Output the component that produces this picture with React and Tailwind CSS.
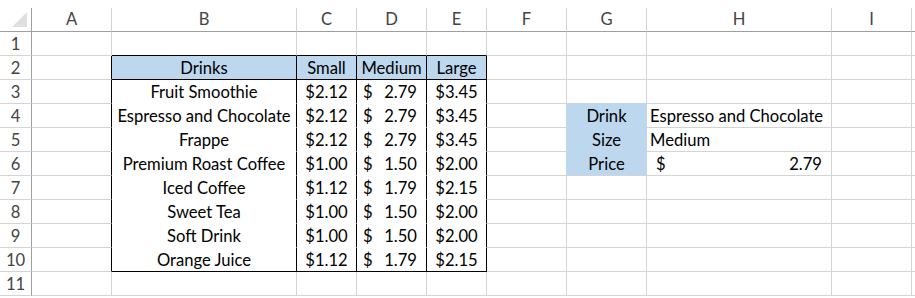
import React from 'react';

const COLS = ['A', 'B', 'C', 'D', 'E', 'F', 'G', 'H', 'I'];
const ROWS = [1, 2, 3, 4, 5, 6, 7, 8, 9, 10, 11];

const drinks = [
  ['Fruit Smoothie', '$2.12', '2.79', '$3.45'],
  ['Espresso and Chocolate', '$2.12', '2.79', '$3.45'],
  ['Frappe', '$2.12', '2.79', '$3.45'],
  ['Premium Roast Coffee', '$1.00', '1.50', '$2.00'],
  ['Iced Coffee', '$1.12', '1.79', '$2.15'],
  ['Sweet Tea', '$1.00', '1.50', '$2.00'],
  ['Soft Drink', '$1.00', '1.50', '$2.00'],
  ['Orange Juice', '$1.12', '1.79', '$2.15'],
];

// cell content keyed by address
const cells = {
  B2: { text: 'Drinks', align: 'center' },
  C2: { text: 'Small', align: 'center' },
  D2: { text: 'Medium', align: 'center' },
  E2: { text: 'Large', align: 'center' },
  G4: { text: 'Drink', align: 'center' },
  H4: { text: 'Espresso and Chocolate', align: 'left' },
  G5: { text: 'Size', align: 'center' },
  H5: { text: 'Medium', align: 'left' },
  G6: { text: 'Price', align: 'center' },
  H6: { text: '2.79', align: 'acct', pad: 'wide' },
};
drinks.forEach(([name, s, m, l], i) => {
  const r = i + 3;
  cells['B' + r] = { text: name, align: 'center' };
  cells['C' + r] = { text: s, align: 'center' };
  cells['D' + r] = { text: m, align: 'acct' };
  cells['E' + r] = { text: l, align: 'center' };
});

const inTable = (c) => c >= 1 && c <= 4;

const Cell = ({ r, c }) => {
  const data = cells[COLS[c] + r];

  let right = 'border-r-[#d4d4d4]';
  if (r >= 2 && r <= 10 && c <= 4) right = 'border-r-black';
  else if (r >= 4 && r <= 6 && (c === 5 || c === 6)) right = 'border-r-[#bdd7ee]';

  let bottom = 'border-b-[#d4d4d4]';
  if (inTable(c) && (r === 1 || r === 2 || r === 10)) bottom = 'border-b-black';
  else if (inTable(c) && r >= 3 && r <= 9) bottom = 'border-b-white';
  else if (c === 6 && r >= 3 && r <= 5) bottom = 'border-b-[#bdd7ee]';

  const blue = (r === 2 && inTable(c)) || (c === 6 && r >= 4 && r <= 6);
  const bg = blue ? 'bg-[#bdd7ee]' : 'bg-white';

  let content = null;
  if (data) {
    if (data.align === 'acct') {
      content = (
        <div className={data.pad === 'wide' ? 'flex w-full justify-between pl-[9px] pr-[9px]' : 'flex w-full justify-between pl-[6px] pr-[9px]'}>
          <span>$</span>
          <span>{data.text}</span>
        </div>
      );
    } else if (data.align === 'left') {
      content = <span className="pl-[3px] whitespace-nowrap">{data.text}</span>;
    } else {
      content = <span className="w-full text-center whitespace-nowrap">{data.text}</span>;
    }
  }

  return (
    <div className={`flex h-6 items-start overflow-visible border-r border-b pt-px leading-[23px] text-black ${right} ${bottom} ${bg}`}>
      {content}
    </div>
  );
};

const App = () => {
  return (
    <div
      className="h-[298px] w-[915px] overflow-hidden bg-white pt-2 text-[16.6px]"
      style={{ fontFamily: 'Lato, "Liberation Sans", sans-serif' }}
    >
      <div className="grid grid-cols-[32px_80px_185px_60px_70px_60px_80px_80px_185px_80px_3px]">
        {/* column headers */}
        <div className="relative h-6 border-r border-b border-r-[#9e9e9e] border-b-[#9e9e9e] bg-white">
          <svg className="absolute left-0 top-0" width="31" height="23" viewBox="0 0 31 23">
            <polygon points="12,19 27,19 27,4" fill="#dfdfdf" />
          </svg>
        </div>
        {COLS.map((col) => (
          <div
            key={col}
            className="h-6 border-r border-b border-r-[#d4d4d4] border-b-[#9e9e9e] bg-white text-center leading-[23px] text-[#444444]"
          >
            {col}
          </div>
        ))}
        <div className="h-6 border-b border-b-[#9e9e9e]" />

        {ROWS.map((r) => (
          <React.Fragment key={r}>
            <div className="h-6 border-r border-b border-r-[#9e9e9e] border-b-[#d4d4d4] pt-px text-center leading-[23px] text-[#444444]">
              {r}
            </div>
            {COLS.map((col, c) => (
              <Cell key={col} r={r} c={c} />
            ))}
            <div className="h-6 border-b border-b-[#d4d4d4]" />
          </React.Fragment>
        ))}
      </div>
    </div>
  );
};

export default App;
